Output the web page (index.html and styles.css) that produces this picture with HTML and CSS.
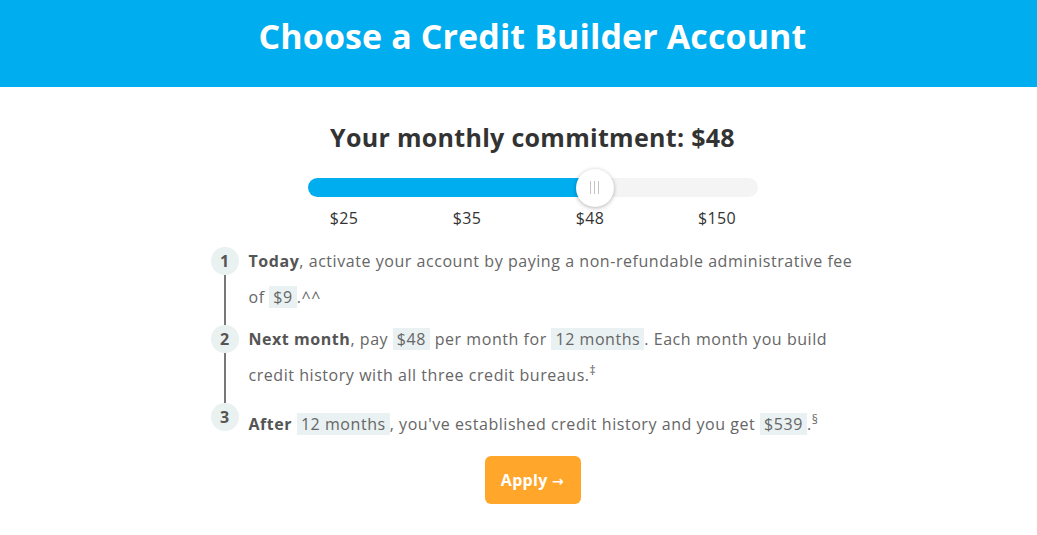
FILE: index.html
```html
<!DOCTYPE html>
<html lang="en">
<head>
  <meta charset="UTF-8" />
  <meta name="viewport" content="width=device-width, initial-scale=1.0" />
  <title>Choose a Credit Builder Account</title>
  <link rel="stylesheet" href="styles.css">
</head>
<body>
  <header class="top">
    <h1>Choose a Credit Builder Account</h1>
  </header>

  <main class="content">
    <h2 class="commit">Your monthly commitment: $48</h2>

    <div class="slider">
      <div class="track">
        <div class="fill" style="width: 287px;"></div>
        <div class="thumb" style="left: 287px;"><span></span><span></span><span></span></div>
      </div>
      <div class="ticks">
        <span>$25</span>
        <span>$35</span>
        <span>$48</span>
        <span>$150</span>
      </div>
    </div>

    <ol class="steps">
      <li class="step">
        <div class="rail"><span class="num">1</span><span class="line"></span></div>
        <p><strong>Today</strong>, activate your account by paying a non-refundable administrative fee of <span class="chip">$9</span>.^^</p>
      </li>
      <li class="step">
        <div class="rail"><span class="num">2</span><span class="line"></span></div>
        <p><strong>Next month</strong>, pay <span class="chip">$48</span> per month for <span class="chip">12 months</span>. Each month you build credit history with all three credit bureaus.<sup>‡</sup></p>
      </li>
      <li class="step last">
        <div class="rail"><span class="num">3</span></div>
        <p><strong>After</strong> <span class="chip">12 months</span>, you've established credit history and you get <span class="chip">$539</span>.<sup>§</sup></p>
      </li>
    </ol>

    <div class="actions">
      <button class="apply">Apply <span class="arrow">→</span></button>
    </div>
  </main>
</body>
</html>
```

FILE: styles.css
```css
body {
  font-family: "Open Sans", "DejaVu Sans", sans-serif;
  background: #fff;
  margin: 0;
  padding: 0;
  color: #333;
}
.top {
  background: #00adef;
  height: 87px;
  text-align: center;
  padding-left: 28px;
}
.top h1 {
  margin: 0;
  padding-top: 13px;
  color: #fff;
  font-size: 34px;
  font-weight: 700;
  line-height: 46px;
  letter-spacing: 0.1px;
}
.content {
  padding-left: 28px;
}
.commit {
  margin: 32px 0 0;
  text-align: center;
  font-size: 25px;
  font-weight: 700;
  line-height: 36px;
  letter-spacing: 0.3px;
  color: #333;
}
.slider {
  width: 450px;
  margin: 23px auto 0;
}
.track {
  position: relative;
  height: 19px;
  border-radius: 10px;
  background: #f4f4f4;
}
.fill {
  height: 100%;
  border-radius: 10px;
  background: #00adef;
}
.thumb {
  position: absolute;
  top: 50%;
  width: 38px;
  height: 38px;
  margin: -19px 0 0 -19px;
  border-radius: 50%;
  background: #fff;
  box-shadow: 0 1px 4px rgba(0, 0, 0, 0.3);
  display: flex;
  align-items: center;
  justify-content: center;
  gap: 3px;
}
.thumb span {
  width: 1px;
  height: 13px;
  background: #c4c4c4;
}
.ticks {
  display: grid;
  grid-template-columns: repeat(4, 123px);
  margin: 10px 0 0 -25px;
  font-size: 16px;
  line-height: 22px;
  letter-spacing: 0.4px;
  color: #333;
}
.ticks span {
  text-align: center;
}
.ticks span:last-child {
  padding-left: 8px;
}
.steps {
  list-style: none;
  width: 652px;
  margin: 14px 0 0 calc(50% - 322px);
  padding: 0;
  color: #666;
  font-size: 16px;
  letter-spacing: 0.55px;
}
.step {
  display: flex;
  gap: 10px;
  padding-bottom: 6px;
}
.rail {
  flex: 0 0 28px;
  display: flex;
  flex-direction: column;
  align-items: center;
  padding-top: 4px;
}
.num {
  width: 28px;
  height: 28px;
  border-radius: 50%;
  background: #e9f1f1;
  color: #555;
  font-weight: 700;
  font-size: 16px;
  line-height: 28px;
  text-align: center;
  letter-spacing: 0;
}
.line {
  flex: 1;
  width: 2px;
  background: #777;
  margin-bottom: -10px;
}
.step p {
  margin: 0;
  line-height: 36px;
}
.step.last p {
  padding-top: 7px;
}
.step strong {
  color: #555;
}
.chip {
  background: #e9f1f2;
  padding: 0 4px;
}
.step sup {
  font-size: 12px;
  line-height: 0;
}
.actions {
  text-align: center;
  margin-top: 8px;
}
.apply {
  background: #ffa62b;
  color: #fff;
  border: none;
  border-radius: 6px;
  width: 96px;
  height: 48px;
  font-family: inherit;
  font-size: 16px;
  font-weight: 700;
  letter-spacing: 0.3px;
  cursor: pointer;
}
.apply .arrow {
  font-size: 14px;
}
```
